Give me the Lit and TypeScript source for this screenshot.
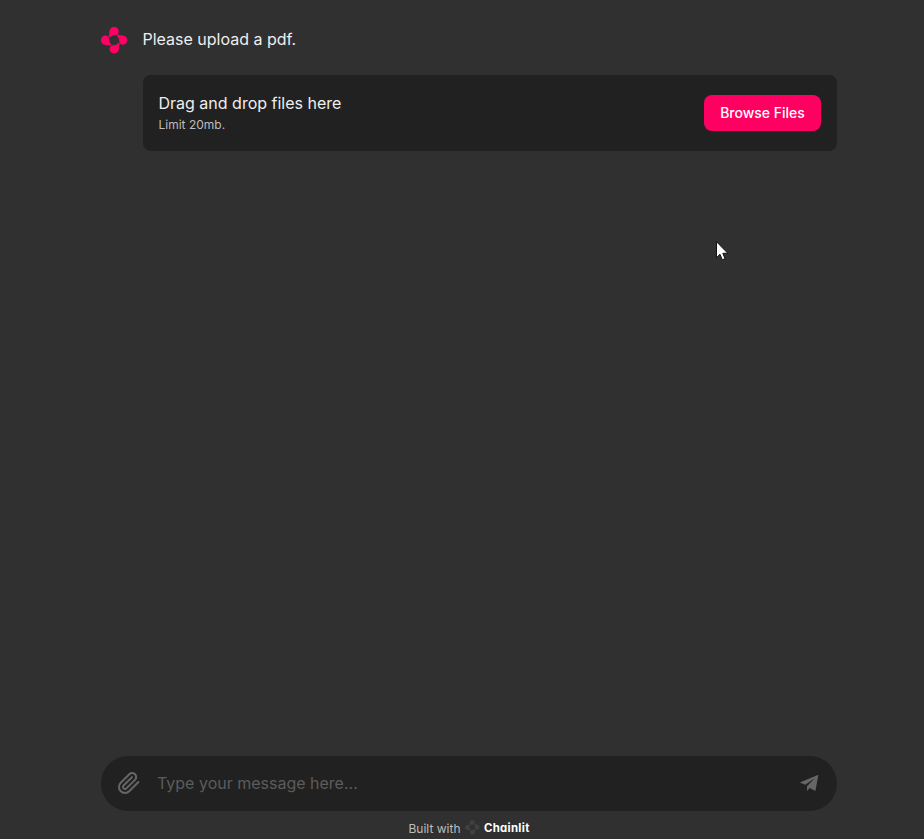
import { LitElement, html, css, svg } from "lit";
import { customElement } from "lit/decorators.js";

const drop = "M7.7 10.3C7.3 9.7 8.2 8.8 8.2 7C8.2 6 8.3 5.2 8.4 4.4C8.6 1.8 10.6 0 13.1 0C15.8 0 17.8 1.9 17.8 4.4C17.8 6.6 16.3 8 14.2 8.2C12.4 8.3 11.1 8.5 9.9 9.6C9 10.4 8.2 10.9 7.7 10.3Z";

@customElement("app-root")
export class AppRoot extends LitElement {
  static styles = css`
    :host {
      display: flex;
      flex-direction: column;
      box-sizing: border-box;
      height: 839px;
      padding: 0 87px 0 101px;
      background: #303030;
      color: #eee;
      font: 16px/24px Inter, sans-serif;
      overflow: hidden;
      position: relative;
    }
    svg { display: block; flex: none; }
    .message { display: flex; gap: 15px; padding-top: 27px; }
    .avatar { color: #ff0066; width: 27px; height: 27px; }
    .body { flex: 1; }
    .prompt { height: 24px; margin-left: -0.5px; }
    .upload {
      display: flex;
      align-items: center;
      justify-content: space-between;
      box-sizing: border-box;
      height: 76px;
      margin-top: 24px;
      padding: 0 16px 0 15.5px;
      border-radius: 8px;
      background: #212121;
    }
    .limit { font-size: 12px; line-height: 20px; color: #bdbdbd; }
    button {
      width: 117px;
      height: 36px;
      padding: 0;
      border: 0;
      border-radius: 8px;
      background: #ff0062;
      color: #fff;
      font: 500 14px/20px Inter, sans-serif;
    }
    .composer {
      display: flex;
      align-items: center;
      box-sizing: border-box;
      height: 55px;
      margin-top: auto;
      padding: 0 16px 1px;
      border-radius: 28px;
      background: #212121;
      color: #5c5c5c;
    }
    .placeholder { flex: 1; padding-left: 16px; }
    .clip, .send { color: #666; }
    .footer {
      display: flex;
      align-items: center;
      height: 28px;
      padding: 7px 0 0 307.5px;
      box-sizing: border-box;
      font-size: 12px;
      line-height: 20px;
      color: #bdbdbd;
    }
    .mark { color: #404040; width: 15px; height: 15px; margin: 0 3.5px 2px 5px; }
    .brand {
      color: #fff;
      font-weight: 700;
      font-size: 11.4px;
      letter-spacing: 0.3px;
      padding-bottom: 2px;
      font-feature-settings: "cv11";
    }
    .cursor { position: absolute; left: 716px; top: 241px; }
  `;

  private logo(cls: string) {
    return html`<svg class=${cls} viewBox="0 0 27 27" fill="currentColor">
      ${[0, 90, 180, 270].map((a) => svg`<path d=${drop} transform="rotate(${a} 13.2 13.2)"/>`)}
    </svg>`;
  }

  render() {
    return html`
      <div class="message">
        ${this.logo("avatar")}
        <div class="body">
          <div class="prompt">Please upload a pdf.</div>
          <div class="upload">
            <div>
              <div>Drag and drop files here</div>
              <div class="limit">Limit 20mb.</div>
            </div>
            <button>Browse Files</button>
          </div>
        </div>
      </div>
      <div class="composer">
        <svg class="clip" width="24" height="24" viewBox="0 0 24 24" fill="none" stroke="currentColor" stroke-width="2" stroke-linecap="round" stroke-linejoin="round">
          <path d="m21.44 11.05-9.19 9.19a6 6 0 0 1-8.49-8.49l8.57-8.57A4 4 0 1 1 18 8.84l-8.59 8.57a2 2 0 0 1-2.83-2.83l8.49-8.48"/>
        </svg>
        <span class="placeholder">Type your message here...</span>
        <svg class="send" width="24" height="24" viewBox="0 0 24 24" fill="currentColor">
          <path d="M2.8 11.5 21.4 3.8 18.4 20 12.8 17 10 20V15.2L18 7 8.3 13.7Z"/>
        </svg>
      </div>
      <div class="footer">
        <span>Built with</span>${this.logo("mark")}<span class="brand">Chainlit</span>
      </div>
      <svg class="cursor" width="13" height="20" viewBox="0 0 13 20">
        <path d="M.5 .7V16.7L4 13.3 6.3 18.8 9 17.7 6.8 12.3H11.8Z" fill="#fff" stroke="#111"/>
      </svg>
    `;
  }
}
